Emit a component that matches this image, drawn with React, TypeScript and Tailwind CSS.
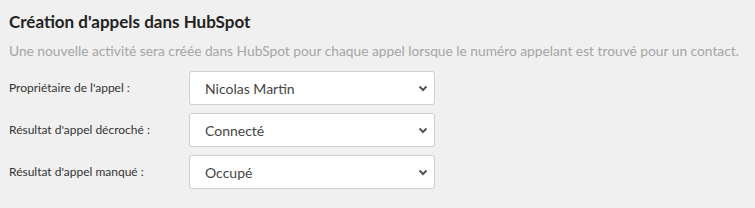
import React from 'react';

const rows = [
  { label: "Propriétaire de l'appel :", value: 'Nicolas Martin' },
  { label: "Résultat d'appel décroché :", value: 'Connecté' },
  { label: "Résultat d'appel manqué :", value: 'Occupé' },
];

function Chevron() {
  return (
    <svg width="10" height="7" viewBox="0 0 10 7" className="text-[#555]">
      <path d="M1.5 1.5 L5 5 L8.5 1.5" fill="none" stroke="currentColor" strokeWidth="2" />
    </svg>
  );
}

export default function App() {
  return (
    <div className="w-[755px] h-[208px] bg-[#f0f0f0] font-['Lato',sans-serif] px-[9px] pt-[10px]">
      <h1 className="text-[17px] font-bold text-[#222] leading-[24px]">Création d'appels dans HubSpot</h1>
      <p className="text-[13.75px] whitespace-nowrap text-[#a5a5a5] leading-[20px] mt-[7px]">
        Une nouvelle activité sera créée dans HubSpot pour chaque appel lorsque le numéro appelant est trouvé pour un contact.
      </p>
      <div className="mt-[10px] flex flex-col gap-[8px]">
        {rows.map((r) => (
          <div key={r.label} className="flex items-center">
            <label className="w-[180px] text-[12px] text-[#333]">{r.label}</label>
            <div className="w-[246px] h-[34px] bg-white border border-[#cfcfcf] rounded-[3px] flex items-center justify-between pl-[15px] pr-[6px]">
              <span className="text-[14px] text-[#444]">{r.value}</span>
              <Chevron />
            </div>
          </div>
        ))}
      </div>
    </div>
  );
}
